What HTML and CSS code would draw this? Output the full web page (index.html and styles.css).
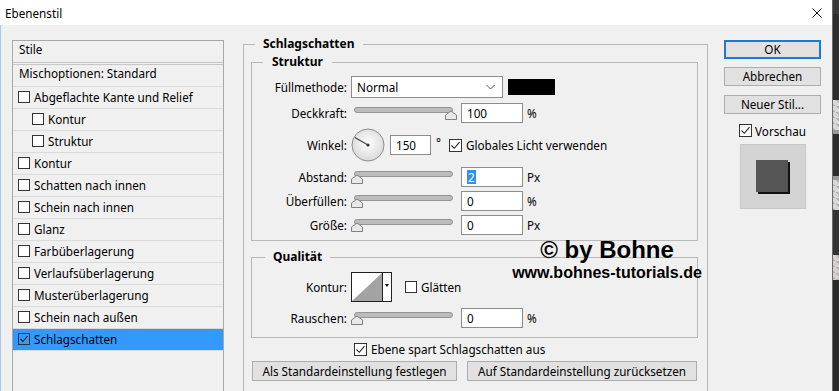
FILE: index.html
```html
<!DOCTYPE html>
<html lang="de">
<head>
<meta charset="UTF-8">
<meta name="viewport" content="width=device-width, initial-scale=1.0">
<title>Ebenenstil</title>
<link rel="stylesheet" href="styles.css">
</head>
<body>
<div class="screen">
  <div class="dialog">
    <div class="titlebar">
      <span class="title">Ebenenstil</span>
      <svg class="close" width="10" height="10" viewBox="0 0 10 10"><path d="M0.5 0.5 L9.5 9.5 M9.5 0.5 L0.5 9.5" stroke="#111" stroke-width="1"/></svg>
    </div>

    <div class="dlgbody">
      <!-- Stile-Liste -->
      <div class="stylelist">
        <div class="lhead">Stile</div>
        <div class="litem plain">Mischoptionen: Standard</div>
        <div class="litem"><span class="cb"></span>Abgeflachte Kante und Relief</div>
        <div class="litem sub"><span class="cb"></span>Kontur</div>
        <div class="litem sub"><span class="cb"></span>Struktur</div>
        <div class="litem"><span class="cb"></span>Kontur</div>
        <div class="litem"><span class="cb"></span>Schatten nach innen</div>
        <div class="litem"><span class="cb"></span>Schein nach innen</div>
        <div class="litem"><span class="cb"></span>Glanz</div>
        <div class="litem"><span class="cb"></span>Farbüberlagerung</div>
        <div class="litem"><span class="cb"></span>Verlaufsüberlagerung</div>
        <div class="litem"><span class="cb"></span>Musterüberlagerung</div>
        <div class="litem"><span class="cb"></span>Schein nach außen</div>
        <div class="litem sel"><span class="cb"><svg width="10" height="10" viewBox="0 0 10 10"><path d="M1.5 5 L4 7.5 L8.5 2" fill="none" stroke="#222" stroke-width="1.1"/></svg></span>Schlagschatten</div>
      </div>

      <!-- Einstellungen -->
      <fieldset class="grp main">
        <legend class="lg-main">Schlagschatten</legend>

        <fieldset class="grp inner struktur">
          <legend class="lg-struktur">Struktur</legend>

          <div class="row r1">
            <span class="lbl">Füllmethode:</span>
            <div class="select">Normal
              <svg class="chev" width="9" height="6" viewBox="0 0 9 6"><path d="M0.5 1 L4.5 5 L8.5 1" fill="none" stroke="#555" stroke-width="1"/></svg>
            </div>
            <span class="swatch"></span>
          </div>

          <div class="row r2">
            <span class="lbl">Deckkraft:</span>
            <svg class="slider" width="106" height="20" viewBox="0 0 106 20">
              <rect x="3.5" y="4.5" width="98" height="5" rx="2.5" fill="#bcbcbc" stroke="#959595"/>
              <path d="M100 8 L105.5 12 V16.5 H94.5 V12 Z" fill="#e8e8e8" stroke="#7f7f7f"/>
            </svg>
            <span class="field">100</span>
            <span class="unit">%</span>
          </div>

          <div class="row r3">
            <span class="lbl">Winkel:</span>
            <svg class="dial" width="34" height="34" viewBox="0 0 34 34">
              <defs>
                <radialGradient id="dialfill" cx="50%" cy="45%" r="60%">
                  <stop offset="0" stop-color="#ffffff"/>
                  <stop offset="1" stop-color="#d6d6d6"/>
                </radialGradient>
              </defs>
              <circle cx="17" cy="17" r="16" fill="url(#dialfill)" stroke="#8e8e8e"/>
              <line x1="17" y1="17" x2="3.8" y2="9.4" stroke="#444" stroke-width="1.2"/>
              <circle cx="17" cy="17" r="1.6" fill="#333"/>
            </svg>
            <span class="field short">150</span>
            <span class="deg">°</span>
            <span class="cb gl"><svg width="11" height="11" viewBox="0 0 11 11"><path d="M1.5 5.5 L4.3 8.3 L9.5 2.2" fill="none" stroke="#222" stroke-width="1.1"/></svg></span>
            <span>Globales Licht verwenden</span>
          </div>

          <div class="row r4">
            <span class="lbl">Abstand:</span>
            <svg class="slider" width="106" height="20" viewBox="0 0 106 20">
              <rect x="3.5" y="4.5" width="98" height="5" rx="2.5" fill="#bcbcbc" stroke="#959595"/>
              <path d="M6 8 L11.5 12 V16.5 H0.5 V12 Z" fill="#e8e8e8" stroke="#7f7f7f"/>
            </svg>
            <span class="field"><span class="hl">2</span></span>
            <span class="unit">Px</span>
          </div>

          <div class="row r5">
            <span class="lbl">Überfüllen:</span>
            <svg class="slider" width="106" height="20" viewBox="0 0 106 20">
              <rect x="3.5" y="4.5" width="98" height="5" rx="2.5" fill="#bcbcbc" stroke="#959595"/>
              <path d="M6 8 L11.5 12 V16.5 H0.5 V12 Z" fill="#e8e8e8" stroke="#7f7f7f"/>
            </svg>
            <span class="field">0</span>
            <span class="unit">%</span>
          </div>

          <div class="row r6">
            <span class="lbl">Größe:</span>
            <svg class="slider" width="106" height="20" viewBox="0 0 106 20">
              <rect x="3.5" y="4.5" width="98" height="5" rx="2.5" fill="#bcbcbc" stroke="#959595"/>
              <path d="M6 8 L11.5 12 V16.5 H0.5 V12 Z" fill="#e8e8e8" stroke="#7f7f7f"/>
            </svg>
            <span class="field">0</span>
            <span class="unit">Px</span>
          </div>
        </fieldset>

        <fieldset class="grp inner qualitaet">
          <legend class="lg-qual">Qualität</legend>

          <div class="row q1">
            <span class="lbl">Kontur:</span>
            <div class="contour">
              <svg width="41" height="30" viewBox="0 0 41 30">
                <rect x="0.5" y="0.5" width="40" height="29" fill="#fff" stroke="#222"/>
                <path d="M1 29 L31 1 V29 Z" fill="#a3a3a3"/>
                <line x1="31.5" y1="1" x2="31.5" y2="29" stroke="#222"/>
                <path d="M34 12 L38 12 L36 15 Z" fill="#111"/>
              </svg>
            </div>
            <span class="cb gla"></span>
            <span>Glätten</span>
          </div>

          <div class="row q2">
            <span class="lbl">Rauschen:</span>
            <svg class="slider" width="106" height="20" viewBox="0 0 106 20">
              <rect x="3.5" y="4.5" width="98" height="5" rx="2.5" fill="#bcbcbc" stroke="#959595"/>
              <path d="M6 8 L11.5 12 V16.5 H0.5 V12 Z" fill="#e8e8e8" stroke="#7f7f7f"/>
            </svg>
            <span class="field">0</span>
            <span class="unit">%</span>
          </div>
        </fieldset>

        <div class="knockout">
          <span class="cb"><svg width="11" height="11" viewBox="0 0 11 11"><path d="M1.5 5.5 L4.3 8.3 L9.5 2.2" fill="none" stroke="#222" stroke-width="1.1"/></svg></span>
          <span>Ebene spart Schlagschatten aus</span>
        </div>

        <div class="defaults">
          <button class="btn b-set">Als Standardeinstellung festlegen</button>
          <button class="btn b-reset">Auf Standardeinstellung zurücksetzen</button>
        </div>
      </fieldset>

      <!-- Buttons rechts -->
      <div class="actions">
        <button class="btn ok">OK</button>
        <button class="btn cancel">Abbrechen</button>
        <button class="btn newstyle">Neuer Stil...</button>
        <div class="preview-check">
          <span class="cb"><svg width="11" height="11" viewBox="0 0 11 11"><path d="M1.5 5.5 L4.3 8.3 L9.5 2.2" fill="none" stroke="#222" stroke-width="1.1"/></svg></span>
          <span>Vorschau</span>
        </div>
        <div class="preview"><div class="preview-square"></div></div>
      </div>
    </div>

    <div class="watermark">
      <div class="wm1">© by Bohne</div>
      <div class="wm2">www.bohnes-tutorials.de</div>
    </div>
  </div>

  <!-- Photoshop im Hintergrund -->
  <div class="backdrop">
    <div class="bd b-top"></div>
    <div class="bd b-dark1"></div>
    <div class="bd b-check"></div>
    <div class="bd b-line"></div>
    <div class="bd b-dark2"></div>
    <div class="bd b-line"></div>
    <div class="bd b-check"></div>
    <div class="bd b-dark3"></div>
    <div class="bd b-check pink"></div>
    <div class="bd b-dark4"></div>
  </div>
</div>
</body>
</html>
```

FILE: styles.css
```css
body {
  margin: 0;
  font-family: 'Noto Sans', 'Liberation Sans', sans-serif;
  font-size: 11.7px;
  color: #000;
  background-color: #333;
}
.screen {
  width: 839px;
  height: 391px;
  display: flex;
  overflow: hidden;
}
.dialog {
  position: relative;
  width: 833px;
  background-color: #f0f0f0;
  display: flex;
  flex-direction: column;
}
.titlebar {
  height: 25px;
  background-color: #fff;
  display: flex;
  align-items: center;
  justify-content: space-between;
  padding: 0 10px 0 5px;
  flex: none;
}
.close {
  margin-top: 1px;
}
.dlgbody {
  flex: 1;
  display: flex;
  align-items: flex-start;
  padding: 11px 0 0 11px;
  border-left: 1px solid #a9c8ea;
  overflow: hidden;
}

/* Stile-Liste */
.stylelist {
  width: 212px;
  height: 360px;
  box-sizing: border-box;
  margin-top: 4px;
  border: 1px solid #a8a8a8;
  border-bottom: none;
  flex: none;
}
.lhead {
  height: 16px;
  line-height: 16px;
  padding: 0 0 5px 6px;
  border-bottom: 3px double #c6c6c6;
}
.litem {
  height: 20px;
  padding-bottom: 1px;
  display: flex;
  align-items: center;
  padding-left: 5px;
  border-bottom: 1px solid #dadada;
}
.litem.plain {
  padding-left: 6px;
  align-items: flex-start;
  line-height: 16px;
}
.litem.sub {
  padding-left: 19px;
}
.litem.sel {
  background-color: #3399ff;
}
.cb {
  width: 12px;
  height: 12px;
  box-sizing: border-box;
  border: 1px solid #333;
  background-color: #fff;
  margin-right: 4px;
  display: inline-flex;
  align-items: center;
  justify-content: center;
  flex: none;
}
.litem.sel .cb {
  background-color: transparent;
}

/* Gruppen */
.grp {
  margin: 0;
  padding: 0;
  min-width: 0;
  border: 1px solid #b8b8b8;
}
.grp legend {
  font-weight: bold;
  font-size: 12px;
  line-height: 16px;
}
.main {
  width: 465px;
  height: 380px;
  box-sizing: border-box;
  margin-left: 19px;
  flex: none;
}
.lg-main {
  margin-left: 11px;
  padding: 0 8px;
}
.inner {
  margin: 0 9px 0 7px;
}
.struktur {
  margin-top: 2px;
  padding-bottom: 5px;
}
.lg-struktur {
  margin-left: 11px;
  padding: 0 9px;
}
.qualitaet {
  margin-top: 8px;
  padding-bottom: 9px;
}
.lg-qual {
  margin-left: 13px;
  padding: 0 8px;
}

.row {
  display: flex;
  align-items: center;
  height: 22px;
}
.lbl {
  width: 95px;
  margin-right: 4px;
  text-align: right;
  flex: none;
}
.r1 { margin-top: 6px; }
.r2 { margin-top: 4px; }
.r3 { margin-top: 4px; height: 34px; }
.r4 { margin-top: 5px; height: 20px; }
.r5, .r6 { margin-top: 4px; height: 20px; }
.q1 { margin-top: 7px; height: 30px; }
.q2 { margin-top: 6px; height: 20px; }

.select {
  width: 152px;
  height: 22px;
  box-sizing: border-box;
  border: 1px solid #8c8c8c;
  background-color: #fff;
  display: flex;
  align-items: center;
  justify-content: space-between;
  padding: 0 7px 0 5px;
}
.swatch {
  width: 47px;
  height: 16px;
  margin-left: 5px;
  background-color: #000;
}
.slider {
  flex: none;
  margin-right: 4px;
}
.field {
  width: 62px;
  height: 20px;
  box-sizing: border-box;
  border: 1px solid #8c8c8c;
  background-color: #fff;
  padding-left: 5px;
  display: flex;
  align-items: center;
}
.field.short {
  width: 41px;
  margin-left: 5px;
}
.hl {
  background-color: #3390e6;
  color: #fff;
  padding: 0 1px;
  line-height: 14px;
}
.unit {
  margin-left: 4px;
}
.deg {
  margin-left: 5px;
  margin-right: 8px;
  margin-top: -7px;
}
.cb.gl {
  width: 13px;
  height: 13px;
}
.cb.gla {
  width: 12px;
  height: 12px;
  margin-left: 13px;
}
.contour {
  height: 30px;
}

.knockout {
  display: flex;
  align-items: center;
  height: 14px;
  margin: 4px 0 0 110px;
}
.knockout .cb {
  width: 13px;
  height: 13px;
  margin-right: 4px;
}
.defaults {
  display: flex;
  gap: 10px;
  margin: 5px 0 0 8px;
}

.btn {
  height: 20px;
  box-sizing: border-box;
  border: 1px solid #adadad;
  background-color: #e1e1e1;
  font-family: inherit;
  font-size: 11.7px;
  color: #000;
  padding: 0;
  line-height: 18px;
}
.b-set {
  width: 205px;
}
.b-reset {
  width: 230px;
}

/* rechte Spalte */
.actions {
  width: 97px;
  margin: 4px 0 0 16px;
  display: flex;
  flex-direction: column;
  align-items: center;
  flex: none;
}
.actions .btn {
  width: 97px;
  height: 19px;
  line-height: 17px;
}
.actions .ok {
  border: 2px solid #1a7ad6;
  line-height: 15px;
}
.actions .cancel {
  margin-top: 8px;
}
.actions .newstyle {
  margin-top: 9px;
}
.preview-check {
  display: flex;
  align-items: center;
  margin-top: 10px;
  height: 13px;
}
.preview-check .cb {
  width: 13px;
  height: 13px;
  margin-right: 3px;
}
.preview {
  width: 66px;
  height: 65px;
  box-sizing: border-box;
  margin-top: 7px;
  background-color: #d4d4d4;
  border: 1px solid #c8c8c8;
  display: flex;
  align-items: center;
  justify-content: center;
}
.preview-square {
  width: 32px;
  height: 32px;
  background-color: #555;
  box-shadow: 2px 2px 0 #111;
  margin: -2px 0 0 -2px;
}

/* Wasserzeichen */
.watermark {
  position: absolute;
  left: 487px;
  top: 238px;
  width: 240px;
  text-align: center;
  font-family: 'Liberation Sans', Arial, sans-serif;
  font-weight: bold;
  color: #000;
}
.wm1 {
  font-size: 24px;
  line-height: 24px;
}
.wm2 {
  font-size: 16px;
  line-height: 21px;
}

/* Hintergrund rechts */
.backdrop {
  width: 6px;
  display: flex;
  flex-direction: column;
  border-left: 1px solid #6a6a6a;
  background-color: #363636;
}
.bd { flex: none; }
.b-top { height: 14px; background-color: #3a3a3a; }
.b-dark1 { height: 86px; background-color: #2e2e2e; }
.b-check {
  height: 30px;
  background-color: #d8d8d8;
  background-image: linear-gradient(45deg, #b5b5b5 25%, transparent 25%, transparent 75%, #b5b5b5 75%);
  background-size: 6px 6px;
}
.b-check.pink { height: 25px; background-color: #d9cfcf; }
.b-line { height: 4px; background-color: #9a9a9a; }
.b-dark2 { height: 42px; background-color: #2c2c2c; }
.b-dark3 { height: 45px; background-color: #333; }
.b-dark4 { height: 111px; background-color: #2b2b2b; }
```
